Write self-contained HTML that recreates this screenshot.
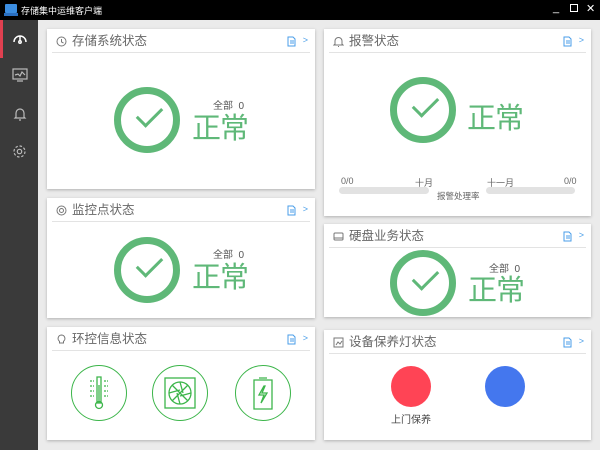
<!DOCTYPE html><html><head><meta charset="utf-8"><style>
*{margin:0;padding:0;box-sizing:border-box}
body{width:600px;height:450px;overflow:hidden;background:#ebebeb;font-family:"Liberation Sans","Noto Sans CJK SC",sans-serif;position:relative}
.tb{position:absolute;left:0;top:0;width:600px;height:20px;background:#000;color:#fff;font-size:9px}
.sb{position:absolute;left:0;top:20px;width:38px;height:430px;background:#3a3a3a}
.card{position:absolute;background:#fff;box-shadow:0 1px 3px rgba(0,0,0,.25)}
.hd{position:absolute;left:5px;right:5px;top:0;height:24px;border-bottom:1px solid #e3e3e3;font-size:12.5px;color:#666;line-height:24px;padding-left:20px}
.hd svg.i{position:absolute;left:4px;top:7px}
.doc{position:absolute;right:14px;top:7px;line-height:0;display:block}
.arr{position:absolute;right:2px;top:-1px;color:#4a9ee8;font-size:9px;line-height:24px}
.ok{position:absolute;width:66px;height:66px;border-radius:50%;border:7px solid #5fb878}
.ok:after{content:"";position:absolute;left:16px;top:13px;width:22px;height:11px;border-left:3.5px solid #5fb878;border-bottom:3.5px solid #5fb878;transform:rotate(-45deg)}
.zc{position:absolute;font-size:29px;color:#5fb878;line-height:30px;letter-spacing:-1px}
.qb{position:absolute;font-size:10px;color:#555}
.g{position:absolute;width:56px;height:56px;border-radius:50%;border:1.5px solid #3cb54a}
.bar{position:absolute;height:7px;border-radius:4px;background:#e2e2e2;top:185px}
.sm{position:absolute;font-size:9px;color:#666}
</style></head><body>
<div class="tb"><svg style="position:absolute;left:4px;top:4px" width="14" height="12"><rect x="1" y="0" width="12" height="9" rx="1" fill="#3b8de0"/><rect x="0" y="9" width="14" height="3" fill="#2a6fc0"/></svg><span style="position:absolute;left:21px;top:4px">存储集中运维客户端</span>
<span style="position:absolute;left:553px;top:2px;font-size:11px">_</span><span style="position:absolute;left:570px;top:4px;width:8px;height:8px;border:1px solid #fff"></span><span style="position:absolute;left:586px;top:2px;font-size:11px">✕</span></div>
<div class="sb"><div style="position:absolute;left:0;top:0;width:3px;height:38px;background:#e04050"></div>
<svg style="position:absolute;left:12px;top:10px" width="16" height="16" fill="none" stroke="#fff" stroke-width="1.5"><path d="M2 12A6 6 0 1 1 14 12"/><path d="M8 6v5"/><circle cx="8" cy="12" r="1.2"/></svg>
<svg style="position:absolute;left:12px;top:48px" width="16" height="14" fill="none" stroke="#bbb" stroke-width="1.2"><rect x="1" y="1" width="14" height="10"/><path d="M3 7l3-1 2 2 2-4 3 3M5 13h6"/></svg>
<svg style="position:absolute;left:13px;top:87px" width="14" height="14" fill="none" stroke="#bbb" stroke-width="1.2"><path d="M3 10V6a4 4 0 0 1 8 0v4l1 1H2zM6 13h2"/></svg>
<svg style="position:absolute;left:12px;top:124px" width="15" height="15" fill="none" stroke="#bbb" stroke-width="1.2"><circle cx="7.5" cy="7.5" r="2.2"/><circle cx="7.5" cy="7.5" r="5.5" stroke-dasharray="2.5 1.8"/></svg></div>

<div class="card" style="left:47px;top:29px;width:268px;height:160px"><div class="hd"><svg class="i" width="11" height="11" fill="none" stroke="#777"><circle cx="5.5" cy="5.5" r="4.5"/><path d="M5.5 3v3l2 1"/></svg>存储系统状态<span class="doc"><svg width="9" height="11" fill="none" stroke="#4a9ee8"><path d="M1 1h5l2 2v7H1z"/><path d="M3 5h4M3 7h4"/></svg></span><span class="arr">&gt;</span></div>
<div class="ok" style="left:67px;top:58px"></div><div class="qb" style="left:166px;top:68px">全部 &nbsp;0</div><div class="zc" style="left:145px;top:85px">正常</div></div>

<div class="card" style="left:47px;top:198px;width:268px;height:120px"><div class="hd"><svg class="i" width="11" height="11" fill="none" stroke="#777"><circle cx="5.5" cy="5.5" r="4.5"/><circle cx="5.5" cy="5.5" r="2"/></svg>监控点状态<span class="doc"><svg width="9" height="11" fill="none" stroke="#4a9ee8"><path d="M1 1h5l2 2v7H1z"/><path d="M3 5h4M3 7h4"/></svg></span><span class="arr">&gt;</span></div>
<div class="ok" style="left:67px;top:39px"></div><div class="qb" style="left:166px;top:48px">全部 &nbsp;0</div><div class="zc" style="left:145px;top:65px">正常</div></div>

<div class="card" style="left:47px;top:327px;width:268px;height:113px"><div class="hd"><svg class="i" width="11" height="11" fill="none" stroke="#777"><path d="M5.5 1a3.5 3.5 0 0 1 2 6.3V9h-4V7.3A3.5 3.5 0 0 1 5.5 1z"/></svg>环控信息状态<span class="doc"><svg width="9" height="11" fill="none" stroke="#4a9ee8"><path d="M1 1h5l2 2v7H1z"/><path d="M3 5h4M3 7h4"/></svg></span><span class="arr">&gt;</span></div>
<div class="g" style="left:24px;top:38px"></div>
<svg style="position:absolute;left:40px;top:48px" width="24" height="36" fill="none" stroke="#3cb54a" stroke-width="1.3"><path d="M10 2h4v26h-4zM12 10v18"/><circle cx="12" cy="30" r="3.5"/><path d="M3 6h4M3 11h4M3 16h4M3 21h4M17 6h4M17 11h4M17 16h4M17 21h4" stroke-dasharray="2 1"/></svg>
<div class="g" style="left:105px;top:38px"></div>
<svg style="position:absolute;left:117px;top:50px" width="32" height="32" fill="none" stroke="#3cb54a" stroke-width="1.3"><rect x="1" y="1" width="30" height="30"/><circle cx="16" cy="16" r="11"/><path d="M16 5l3 11M27 16l-11 3M16 27l-3-11M5 16l11-3M8 8l8 8M24 24l-8-8M24 8l-8 8M8 24l8-8"/></svg>
<div class="g" style="left:188px;top:38px"></div>
<svg style="position:absolute;left:204px;top:48px" width="24" height="36" fill="none" stroke="#3cb54a" stroke-width="1.3"><path d="M8 3h8M3 5h18v29H3z"/><path d="M13 11l-5 9h5l-3 8 6-10h-5l3-7z"/></svg></div>

<div class="card" style="left:324px;top:29px;width:267px;height:187px"><div class="hd"><svg class="i" width="11" height="11" fill="none" stroke="#777"><path d="M2 8V5a3.5 3.5 0 0 1 7 0v3l1 1H1zM5 10.5h1"/></svg>报警状态<span class="doc"><svg width="9" height="11" fill="none" stroke="#4a9ee8"><path d="M1 1h5l2 2v7H1z"/><path d="M3 5h4M3 7h4"/></svg></span><span class="arr">&gt;</span></div>
<div class="ok" style="left:66px;top:48px"></div><div class="zc" style="left:143px;top:75px">正常</div>
<div class="sm" style="left:17px;top:147px">0/0</div><div class="sm" style="left:91px;top:147px">十月</div><div class="sm" style="left:163px;top:147px">十一月</div><div class="sm" style="left:240px;top:147px">0/0</div>
<div class="bar" style="left:15px;width:90px;top:158px"></div><div class="bar" style="left:162px;width:89px;top:158px"></div>
<div class="sm" style="left:113px;top:161px;font-size:8.5px">报警处理率</div></div>

<div class="card" style="left:324px;top:224px;width:267px;height:93px"><div class="hd"><svg class="i" width="11" height="11" fill="none" stroke="#777"><rect x="1" y="2" width="9" height="7" rx="1"/><path d="M1 7h9"/></svg>硬盘业务状态<span class="doc"><svg width="9" height="11" fill="none" stroke="#4a9ee8"><path d="M1 1h5l2 2v7H1z"/><path d="M3 5h4M3 7h4"/></svg></span><span class="arr">&gt;</span></div>
<div class="ok" style="left:66px;top:26px"></div><div class="qb" style="left:165px;top:36px">全部 &nbsp;0</div><div class="zc" style="left:144px;top:52px">正常</div></div>

<div class="card" style="left:324px;top:330px;width:267px;height:110px"><div class="hd"><svg class="i" width="11" height="11" fill="none" stroke="#777"><rect x="1" y="1" width="9" height="9"/><path d="M3 8l2-3 2 2 2-3"/></svg>设备保养灯状态<span class="doc"><svg width="9" height="11" fill="none" stroke="#4a9ee8"><path d="M1 1h5l2 2v7H1z"/><path d="M3 5h4M3 7h4"/></svg></span><span class="arr">&gt;</span></div>
<div style="position:absolute;left:67px;top:36px;width:40px;height:41px;border-radius:50%;background:#ff4455"></div>
<div style="position:absolute;left:161px;top:36px;width:40px;height:41px;border-radius:50%;background:#4477ee"></div>
<div style="position:absolute;left:67px;top:81px;font-size:10px;color:#444">上门保养</div></div>
</body></html>
